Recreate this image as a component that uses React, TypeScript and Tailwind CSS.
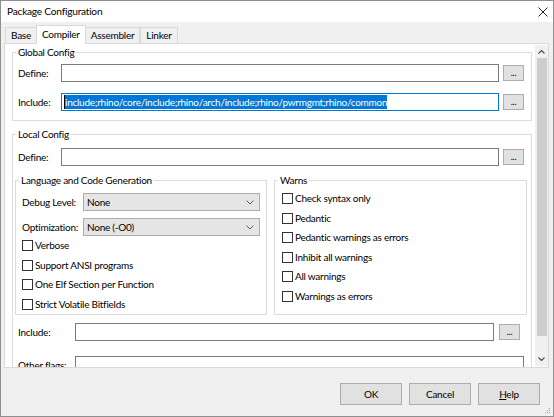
import type { ReactNode } from "react";

function TextBox({ className = "", children }: { className?: string; children?: ReactNode }) {
  return (
    <div className={`flex h-[18px] shrink-0 items-center border border-[#7a7a7a] bg-white ${className}`}>
      {children}
    </div>
  );
}

function BrowseButton() {
  return (
    <div className="flex h-[16px] w-[21px] shrink-0 items-end justify-center border border-[#adadad] bg-[#e1e1e1] pb-[3px] text-[9px] leading-none">
      ...
    </div>
  );
}

function Group({ title, className = "", children }: { title: string; className?: string; children?: ReactNode }) {
  return (
    <fieldset className={`border border-[#dcdcdc] ${className}`}>
      <legend className="ml-[3px] px-[2px] leading-[16px]">{title}</legend>
      {children}
    </fieldset>
  );
}

function Check({ label }: { label: string }) {
  return (
    <div className="flex h-[19.5px] items-center gap-[2px]">
      <span className="h-[11px] w-[11px] shrink-0 border border-[#333333] bg-white" />
      <span>{label}</span>
    </div>
  );
}

function Select({ value }: { value: string }) {
  return (
    <div className="flex h-[18px] w-[177px] items-center justify-between border border-[#acacac] bg-[#e5e5e5] pl-[3px] pr-[5px]">
      <span>{value}</span>
      <svg viewBox="0 0 8 5" className="h-[5px] w-[8px]" fill="none" stroke="#606060" strokeWidth="1">
        <path d="M0.5 0.5l3.5 3.5 3.5-3.5" />
      </svg>
    </div>
  );
}

function Tab({ label, active }: { label: string; active?: boolean }) {
  if (active) {
    return (
      <div className="relative z-10 -mx-[1px] -mb-px flex h-[19px] items-start border border-b-0 border-[#d9d9d9] bg-white px-[5px] pt-[1px]">
        {label}
      </div>
    );
  }
  return (
    <div className="flex h-[16px] items-center border border-b-0 border-[#d9d9d9] bg-[#f0f0f0] px-[5px]">
      {label}
    </div>
  );
}

function DialogButton({ children }: { children: ReactNode }) {
  return (
    <div className="flex h-[22px] w-[62px] items-center justify-center border border-[#adadad] bg-[#e1e1e1]">
      {children}
    </div>
  );
}

export default function App() {
  return (
    <div className="relative flex h-[417px] w-[554px] flex-col whitespace-nowrap border border-[#8f8f8f] bg-[#f0f0f0] font-['Lato','Liberation_Sans',sans-serif] text-[10px] tracking-[-0.25px] text-black">
      {/* title bar */}
      <div className="flex h-[21px] shrink-0 items-center justify-between bg-white pl-[6px] pr-[5px]">
        <span className="text-[10.2px]">Package Configuration</span>
        <svg viewBox="0 0 10 10" className="h-[10px] w-[10px]" fill="none" stroke="#222" strokeWidth="1">
          <path d="M0.5 0.5l9 9M9.5 0.5l-9 9" />
        </svg>
      </div>

      {/* tabs */}
      <div className="flex h-[21px] shrink-0 items-end pl-[4px]">
        <Tab label="Base" />
        <Tab label="Compiler" active />
        <Tab label="Assembler" />
        <Tab label="Linker" />
      </div>

      {/* tab page */}
      <div className="ml-[3px] flex h-[325px] w-[545px] shrink-0 border border-[#d9d9d9] bg-white">
        <div className="h-full flex-1 overflow-hidden pl-[7px]">
          <Group title="Global Config" className="w-[520px] pb-[9px]">
            <div className="mt-[4px] flex items-center pl-[5px]">
              <span className="w-[43px]">Define:</span>
              <TextBox className="w-[438px]" />
              <div className="ml-[4px]">
                <BrowseButton />
              </div>
            </div>
            <div className="mt-[11px] flex items-center pl-[5px]">
              <span className="w-[43px]">Include:</span>
              <TextBox className="w-[438px] border-[#0078d7] pl-[2px]">
                <span className="h-[14px] w-px bg-black" />
                <span className="bg-[#0078d7] leading-[14px] text-white">
                  include;rhino/core/include;rhino/arch/include;rhino/pwrmgmt;rhino/common
                </span>
              </TextBox>
              <div className="ml-[4px]">
                <BrowseButton />
              </div>
            </div>
          </Group>

          <Group title="Local Config" className="mt-[5px] w-[520px]">
            <div className="mt-[6px] flex items-center pl-[5px]">
              <span className="w-[43px]">Define:</span>
              <TextBox className="w-[438px]" />
              <div className="ml-[4px]">
                <BrowseButton />
              </div>
            </div>

            <div className="mt-[6px] flex items-stretch pl-[2px]">
              <Group title="Language and Code Generation" className="w-[252px]">
                <div className="mt-[5px] flex items-center pl-[6px]">
                  <span className="w-[61px]">Debug Level:</span>
                  <Select value="None" />
                </div>
                <div className="mt-[7px] flex items-center pl-[6px]">
                  <span className="w-[61px]">Optimization:</span>
                  <Select value="None (-O0)" />
                </div>
                <div className="pl-[6px]">
                  <Check label="Verbose" />
                  <Check label="Support ANSI programs" />
                  <Check label="One Elf Section per Function" />
                  <Check label="Strict Volatile Bitfields" />
                </div>
              </Group>
              <Group title="Warns" className="ml-[7px] w-[253px]">
                <div className="pl-[7px] pt-px">
                  <Check label="Check syntax only" />
                  <Check label="Pedantic" />
                  <Check label="Pedantic warnings as errors" />
                  <Check label="Inhibit all warnings" />
                  <Check label="All warnings" />
                  <Check label="Warnings as errors" />
                </div>
              </Group>
            </div>

            <div className="mt-[8px] flex items-center pl-[5px]">
              <span className="w-[57px]">Include:</span>
              <TextBox className="w-[419px]" />
              <div className="ml-[5px]">
                <BrowseButton />
              </div>
            </div>
            <div className="mt-[15px] flex items-center pb-[10px] pl-[5px]">
              <span className="w-[57px]">Other flags:</span>
              <TextBox className="w-[449px]" />
            </div>
          </Group>
        </div>

        {/* scrollbar */}
        <div className="my-px flex w-[13px] flex-col items-center bg-[#f0f0f0]">
          <div className="flex h-[13px] items-center justify-center">
            <svg viewBox="0 0 7 4" className="h-[4px] w-[7px]" fill="none" stroke="#505050" strokeWidth="1.2">
              <path d="M0.5 3.5l3-3 3 3" />
            </svg>
          </div>
          <div className="h-[278px] w-[10px] bg-[#cdcdcd]" />
          <div className="flex-1" />
          <div className="flex h-[14px] items-center justify-center">
            <svg viewBox="0 0 7 4" className="h-[4px] w-[7px]" fill="none" stroke="#505050" strokeWidth="1.2">
              <path d="M0.5 0.5l3 3 3-3" />
            </svg>
          </div>
        </div>
      </div>

      {/* dialog buttons */}
      <div className="mt-[15px] flex justify-end gap-[7px] pr-[13px]">
        <DialogButton>OK</DialogButton>
        <DialogButton>Cancel</DialogButton>
        <DialogButton>
          <span>
            <span className="underline">H</span>elp
          </span>
        </DialogButton>
      </div>

      {/* size grip */}
      <svg viewBox="0 0 7 7" className="absolute bottom-[2px] right-[2px] h-[7px] w-[7px]" fill="#a0a0a0">
        <rect x="5" y="1" width="1" height="1" />
        <rect x="3" y="3" width="1" height="1" />
        <rect x="5" y="3" width="1" height="1" />
        <rect x="1" y="5" width="1" height="1" />
        <rect x="3" y="5" width="1" height="1" />
        <rect x="5" y="5" width="1" height="1" />
      </svg>
    </div>
  );
}
